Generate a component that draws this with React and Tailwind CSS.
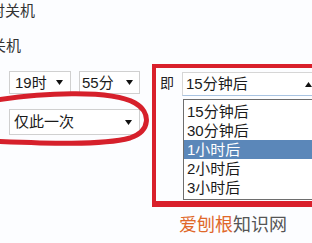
const OPTIONS = ['15分钟后', '30分钟后', '1小时后', '2小时后', '3小时后']

function Arrow({ up = false }) {
  return (
    <svg width="7" height="5" viewBox="0 0 7 5" className="shrink-0">
      <polygon points={up ? '0,5 7,5 3.5,0' : '0,0 7,0 3.5,5'} fill="#111" />
    </svg>
  )
}

function Select({ label, className, textPad, arrowPad }) {
  return (
    <div className={'flex items-center justify-between bg-white border border-[#d0d0d0] ' + className}>
      <span className={'text-[15px] leading-[18px] text-[#1a1a1a] ' + textPad}>{label}</span>
      <span className={arrowPad}><Arrow /></span>
    </div>
  )
}

export default function App() {
  return (
    <div
      className="relative w-[312px] h-[243px] overflow-hidden bg-[#fcfdff] text-[#222]"
      style={{ fontFamily: '"Liberation Sans", "Noto Sans CJK SC", sans-serif' }}
    >
      {/* top labels, cut off on the left */}
      <div className="mt-[2px] -ml-[10px] text-[15px] leading-[18px] text-[#333]">时关机</div>
      <div className="mt-[17px] -ml-[9px] text-[15px] leading-[18px] text-[#333]">关机</div>

      <div className="flex mt-[9px]">
        {/* left: time pickers */}
        <div className="w-[152px] shrink-0 pt-[7px] pl-[9px]">
          <div className="flex gap-[8px]">
            <Select label="19时" className="w-[62px] h-[23px]" textPad="pl-[5px]" arrowPad="pr-[7px]" />
            <Select label="55分" className="w-[61px] h-[23px]" textPad="pl-[2px]" arrowPad="pr-[6px]" />
          </div>
          <Select label="仅此一次" className="mt-[15px] w-[131px] h-[26px]" textPad="pl-[4px]" arrowPad="pr-[7px]" />
        </div>

        {/* right: red annotated box */}
        <div className="shrink-0 w-[172px] h-[143px] border-[4px] border-b-[6px] border-[#d9202b] flex">
          <div className="w-[26px] shrink-0 pl-[4px] pt-[6px] text-[14px] leading-[18px] text-[#222]">即</div>
          <div className="pt-[4px]">
            <div className="flex items-center justify-between w-[134px] h-[24px] bg-white border border-[#d6d6d6] border-b-[#a9c4e2]">
              <span className="pl-[3px] text-[15px] leading-[18px] text-[#1a1a1a]">15分钟后</span>
              <span className="pr-[3px]"><Arrow up /></span>
            </div>
            <div className="ml-[1px] mt-[3px] w-[140px] border border-[#6e6e6e] bg-white py-[2px]">
              {OPTIONS.map((o, i) => (
                <div
                  key={o}
                  className={
                    'h-[19px] pl-[3px] flex items-center text-[15px] leading-[18px] ' +
                    (i === 2 ? 'bg-[#5b87b9] text-white' : 'text-[#1a1a1a]')
                  }
                >
                  {o}
                </div>
              ))}
            </div>
          </div>
        </div>
      </div>

      {/* watermark */}
      <div className="mt-[9px] pl-[179px] text-[18px] leading-[18px] whitespace-nowrap">
        <span className="text-[#e0682a]">爱刨根</span>
        <span className="text-[#555]">知识网</span>
      </div>

      {/* hand-drawn red ellipse */}
      <svg className="absolute inset-0 pointer-events-none" width="312" height="243" viewBox="0 0 312 243">
        <path
          d="M -10 101 C 40 93, 110 89, 135 103 C 151 112, 151 131, 130 138 C 100 146, 40 143, -10 141"
          fill="none"
          stroke="#d6202b"
          strokeWidth="5"
          strokeLinecap="round"
        />
      </svg>
    </div>
  )
}
